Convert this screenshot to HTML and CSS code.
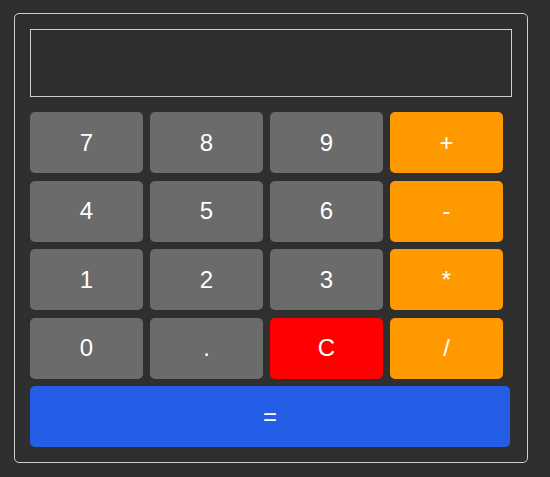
FILE: index.html
```html
<!DOCTYPE html>
<html>
<head>
<meta charset="utf-8">
<link rel="stylesheet" href="styles.css">
</head>
<body>
<div class="calc">
  <div class="display"></div>
  <div class="keys">
    <button class="key">7</button>
    <button class="key">8</button>
    <button class="key">9</button>
    <button class="key op">+</button>
    <button class="key">4</button>
    <button class="key">5</button>
    <button class="key">6</button>
    <button class="key op">-</button>
    <button class="key">1</button>
    <button class="key">2</button>
    <button class="key">3</button>
    <button class="key op">*</button>
    <button class="key">0</button>
    <button class="key">.</button>
    <button class="key clear">C</button>
    <button class="key op">/</button>
    <button class="key equals">=</button>
  </div>
</div>
</body>
</html>
```

FILE: styles.css
```css
html, body {
  margin: 0;
  padding: 0;
  background: #2f2f2f;
  font-family: "Liberation Sans", Arial, sans-serif;
}
body {
  padding: 13px 0 0 14px;
}
.calc {
  width: 482px;
  padding: 15px 15px 15px 15px;
  border: 1px solid #cfcfcf;
  border-radius: 5px;
  background: #2f2f2f;
}
.display {
  box-sizing: border-box;
  width: 482px;
  height: 68px;
  border: 1px solid #cfcfcf;
  background: #2f2f2f;
  margin-bottom: 15px;
}
.keys {
  display: grid;
  grid-template-columns: 113px 113px 113px 113px;
  grid-auto-rows: 61px;
  column-gap: 7px;
  row-gap: 7.5px;
}
.key {
  border: none;
  border-radius: 5px;
  background: #6b6b6b;
  color: #ffffff;
  font-family: "Liberation Sans", Arial, sans-serif;
  font-size: 24px;
  padding: 0;
  margin: 0;
}
.op {
  background: #ff9900;
}
.clear {
  background: #ff0000;
}
.equals {
  grid-column: 1 / 5;
  width: 480px;
  background: #245ee6;
}
```
